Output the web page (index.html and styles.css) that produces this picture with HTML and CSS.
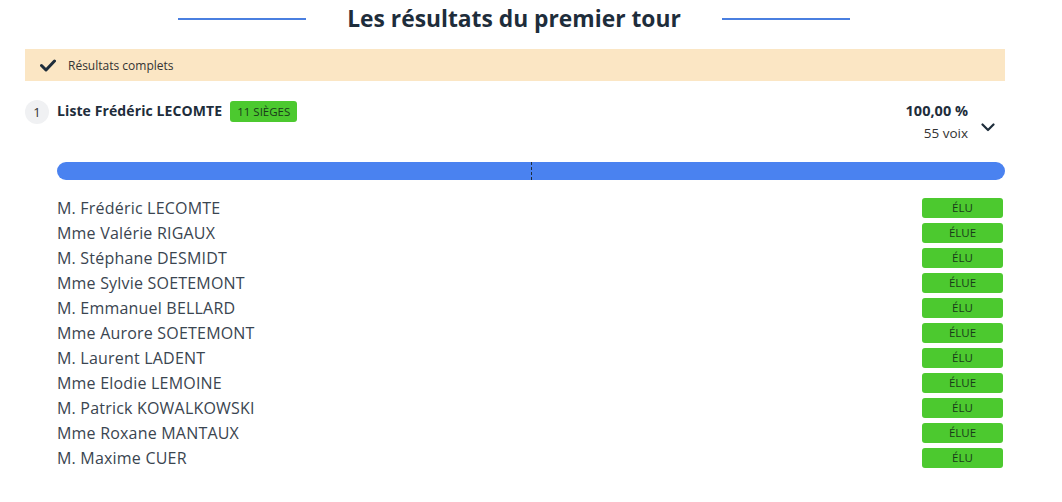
FILE: index.html
```html
<!DOCTYPE html>
<html lang="fr">
<head>
<meta charset="utf-8">
<link rel="stylesheet" href="styles.css">
</head>
<body>
<div class="page">
  <div class="title-row">
    <span class="title-line"></span>
    <h1 class="title">Les résultats du premier tour</h1>
    <span class="title-line"></span>
  </div>
  <div class="banner">
    <svg class="check" width="16" height="13" viewBox="0 0 16 13"><path d="M1.5 6.5 L6 11 L14.5 2" fill="none" stroke="#1e2d3b" stroke-width="3" stroke-linecap="round" stroke-linejoin="round"/></svg>
    <span>Résultats complets</span>
  </div>
  <div class="list-head">
    <div class="list-left">
      <span class="rank">1</span>
      <span class="list-name">Liste Frédéric LECOMTE</span>
      <span class="seats">11 SIÈGES</span>
    </div>
    <div class="list-right">
      <div class="scores">
        <div class="pct">100,00 %</div>
        <div class="votes">55 voix</div>
      </div>
      <svg class="chev" width="14" height="9" viewBox="0 0 14 9"><path d="M1.5 1.5 L7 7 L12.5 1.5" fill="none" stroke="#1e2d3b" stroke-width="2.2" stroke-linecap="round" stroke-linejoin="round"/></svg>
    </div>
  </div>
  <div class="bar"><span class="half"></span></div>
  <ul class="cands">
    <li><span>M. Frédéric LECOMTE</span><span class="elu">ÉLU</span></li>
    <li><span>Mme Valérie RIGAUX</span><span class="elu">ÉLUE</span></li>
    <li><span>M. Stéphane DESMIDT</span><span class="elu">ÉLU</span></li>
    <li><span>Mme Sylvie SOETEMONT</span><span class="elu">ÉLUE</span></li>
    <li><span>M. Emmanuel BELLARD</span><span class="elu">ÉLU</span></li>
    <li><span>Mme Aurore SOETEMONT</span><span class="elu">ÉLUE</span></li>
    <li><span>M. Laurent LADENT</span><span class="elu">ÉLU</span></li>
    <li><span>Mme Elodie LEMOINE</span><span class="elu">ÉLUE</span></li>
    <li><span>M. Patrick KOWALKOWSKI</span><span class="elu">ÉLU</span></li>
    <li><span>Mme Roxane MANTAUX</span><span class="elu">ÉLUE</span></li>
    <li><span>M. Maxime CUER</span><span class="elu">ÉLU</span></li>
  </ul>
</div>
</body>
</html>
```
FILE: styles.css
```css
html, body { margin: 0; padding: 0; background: #fff; }
body { font-family: "Open Sans", "Liberation Sans", sans-serif; color: #1e2d3b; }
.page { width: 980px; margin-left: 25px; }
.title-row { display: flex; align-items: center; justify-content: center; height: 38px; gap: 41px; padding-right: 2px; }
.title-line { width: 128px; height: 2px; background: #4a7fe0; }
.title { margin: 0; font-size: 22.8px; font-weight: 700; color: #1e2d3b; line-height: 38px; }
.banner { margin-top: 11px; height: 32px; background: #fbe6c4; display: flex; align-items: center; padding-left: 15px; gap: 12px; font-size: 12px; color: #333; }
.check { display: block; }
.list-head { display: flex; justify-content: space-between; padding-top: 19px; height: 62px; }
.list-left { display: flex; align-items: flex-start; }
.rank { width: 24px; height: 24px; border-radius: 50%; background: #f0f1f3; font-size: 13px; color: #333; display: flex; align-items: center; justify-content: center; margin-right: 8px; }
.list-name { font-weight: 700; font-size: 14px; line-height: 22px; margin-right: 8px; letter-spacing: 0.1px; color: #1e2d3b; }
.seats { background: #4cc92f; color: #1a3a1a; font-size: 11.5px; border-radius: 3px; height: 21px; line-height: 21px; padding: 0 7px; margin-top: 1px; }
.list-right { display: flex; align-items: flex-start; gap: 13px; padding-right: 10px; }
.scores { text-align: right; }
.pct { font-weight: 700; font-size: 14.5px; line-height: 22px; }
.votes { font-size: 13.5px; line-height: 22px; color: #333; }
.chev { margin-top: 23px; }
.bar { position: relative; margin-left: 32px; height: 18px; border-radius: 9px; background: #4a82f0; }
.half { position: absolute; left: 50%; top: 0; bottom: 0; border-left: 1px dashed #1e2d3b; }
.cands { list-style: none; margin: 15px 0 0 32px; padding: 0; }
.cands li { display: flex; justify-content: space-between; align-items: center; height: 25px; font-size: 16px; letter-spacing: 0.2px; color: #3a4550; }
.elu { width: 81px; height: 20px; line-height: 20px; text-align: center; background: #4cc92f; border-radius: 3px; font-size: 11.5px; letter-spacing: 0; color: #1a3a1a; margin-right: 2px; }
```
